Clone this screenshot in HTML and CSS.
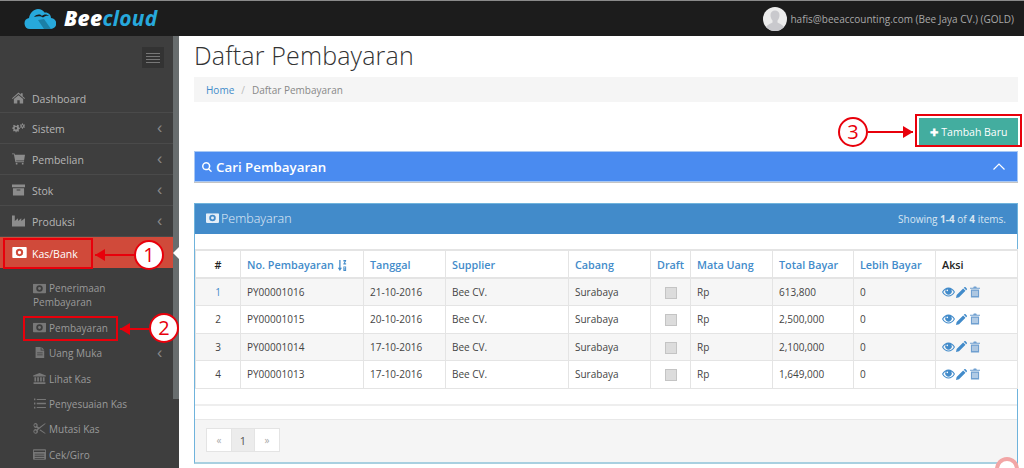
FILE: index.html
```html
<!DOCTYPE html>
<html lang="id">
<head>
<meta charset="utf-8">
<title>Daftar Pembayaran</title>
<link rel="stylesheet" href="styles.css">
</head>
<body>
<svg class="defs" width="0" height="0">
  <symbol id="i-money" viewBox="0 0 16 12"><path fill-rule="evenodd" d="M1 0h14a1 1 0 0 1 1 1v10a1 1 0 0 1-1 1H1a1 1 0 0 1-1-1V1a1 1 0 0 1 1-1zM8 2a4 4 0 1 0 0 8 4 4 0 0 0 0-8zM8 4.200a1.800 1.800 0 1 1 0 3.600 1.800 1.800 0 0 1 0-3.600z"/></symbol>
  <symbol id="i-eye" viewBox="0 0 16 12"><path fill-rule="evenodd" d="M0 6c2-3.600 4.800-5.500 8-5.500S14 2.400 16 6c-2 3.600-4.800 5.500-8 5.500S2 9.600 0 6zm1.500 0c1.500 2.500 3.800 4.200 6.500 4.200s5-1.700 6.500-4.200c-.9-1.400-2-2.500-3.300-3.200a4 4 0 1 1-6.400 0C3.500 3.500 2.400 4.600 1.500 6zM6.500 3a1 1 0 0 0 0 2 1 1 0 0 0 0-2z"/></symbol>
  <symbol id="i-pencil" viewBox="0 0 12 12"><path d="M0 12l.7-3.300L7.800 1.600l2.600 2.600-7.100 7.100zM8.500.9l.6-.6a1 1 0 0 1 1.400 0l1.200 1.200a1 1 0 0 1 0 1.400l-.6.600z"/></symbol>
  <symbol id="i-trash" viewBox="0 0 11 12"><path fill-rule="evenodd" d="M3.500 1.200 4.200 0h2.600l.7 1.200H11v1.200H0V1.200zM1 3.200h9V12H1zM2.800 4.500v6h1v-6zm2.200 0v6h1v-6zm2.200 0v6h1v-6z"/></symbol>
</svg>

<header class="topbar">
  <div class="brand">
    <svg class="brand-cloud" viewBox="0 0 32 22" width="32" height="22"><path fill="#27a9dc" d="M6 21a5.500 5.500 0 0 1-1-10.900C6 4.500 10 1 14 1c3 0 5 1.300 6.500 3.500C24 4 27 6.500 27 10a5.500 5.500 0 0 1-.5 11z"/><path fill="#1a1a1a" d="M10 9c3-3 6-3 8-1 2-2 5-2 7 0-2-.6-4-.2-6 1.600C17 8 14 8 10 9z"/><path fill="#1b7fa6" d="M14 12l6-1 7 10h-7z"/></svg>
    <span class="brand-name"><b>Bee</b><i>cloud</i></span>
  </div>
  <div class="user">
    <svg class="avatar" viewBox="0 0 24 24" width="24" height="24"><circle cx="12" cy="12" r="12" fill="#ececec"/><path fill="#c9c9cd" d="M3 20c2-3 5-3.500 6.500-4.500v-2C8 12 7.500 9.500 7.500 8c0-3 2-4.500 4.500-4.500S16.500 5 16.500 8c0 1.500-.5 4-2 5.500v2c1.500 1 4.500 1.500 6.500 4.500a12 12 0 0 1-18 0z"/></svg>
    <span>hafis@beeaccounting.com (Bee Jaya CV.) (GOLD)</span>
  </div>
</header>

<div class="layout">
  <aside class="sidebar">
    <div class="toggle-row">
      <button class="toggle" type="button" aria-label="Menu"><span></span><span></span><span></span><span></span></button>
    </div>
    <nav class="menu">
      <a class="item">
        <svg class="ico" viewBox="0 0 14 12"><path d="M7 0l2.500 2.200V.8h2v3.200L14 6.300l-.7.700L7 1.600.7 7 0 6.300zM2 7.200 7 3l5 4.200V12H8.300V8.500H5.700V12H2z"/></svg>
        <span class="label">Dashboard</span>
      </a>
      <a class="item">
        <svg class="ico" viewBox="-1 0 16 12"><path fill-rule="evenodd" d="M4 3.500l1-.3.400-1.200 1.300.4 1 .9-.6 1.100.5 1 1.100.3v1.500l-1.100.3-.5 1 .6 1.100-1 1-1.100-.6-1 .4-.3 1.100H3.700L3.400 10.200l-1-.4-1.100.6-1-1 .6-1.100-.4-1L-.6 7V5.500l1.100-.3.400-1-.6-1.100 1-1 1.100.6zM3.800 4.800a1.500 1.500 0 1 0 0 3 1.500 1.500 0 0 0 0-3z"/><path fill-rule="evenodd" d="M11.500 0l1 .4.100 1 .9.500.9-.4.600 1-.8.600v1l.8.600-.6 1-.9-.4-.9.500-.1 1h-1.200l-.1-1-.9-.5-.9.400-.6-1 .8-.6v-1L8.800 2.500l.6-1 .9.400.9-.5.100-1zM11 2.800a1 1 0 1 0 1.600 1.200A1 1 0 0 0 11 2.800z"/></svg>
        <span class="label">Sistem</span><span class="chev">‹</span>
      </a>
      <a class="item">
        <svg class="ico" viewBox="0 0 14 12"><path d="M0 0h2.700l.4 1.500H14l-1 6H4.500l.2 1H13v1H3.700L2 1H0z"/><circle cx="5" cy="11" r="1"/><circle cx="11.500" cy="11" r="1"/></svg>
        <span class="label">Pembelian</span><span class="chev">‹</span>
      </a>
      <a class="item">
        <svg class="ico" viewBox="0 0 14 12"><path fill-rule="evenodd" d="M0 0h14v3H0zM1 4h12v8H1zM5 5.500v1h4v-1z"/></svg>
        <span class="label">Stok</span><span class="chev">‹</span>
      </a>
      <a class="item">
        <svg class="ico" viewBox="0 0 14 12"><path d="M0 0h3v6l3.500-3v3L10 3v3l4-3v9H0z"/></svg>
        <span class="label">Produksi</span><span class="chev">‹</span>
      </a>
      <a class="item active">
        <svg class="ico" viewBox="0 0 16 12"><use href="#i-money"/></svg>
        <span class="label">Kas/Bank</span>
      </a>
      <div class="submenu">
        <a class="sub tall">
          <svg class="ico" viewBox="0 0 16 12"><use href="#i-money"/></svg>
          <span class="label">Penerimaan<br><span class="wrapline">Pembayaran</span></span>
        </a>
        <a class="sub">
          <svg class="ico" viewBox="0 0 16 12"><use href="#i-money"/></svg>
          <span class="label">Pembayaran</span>
        </a>
        <a class="sub">
          <svg class="ico" viewBox="0 0 12 14"><path fill-rule="evenodd" d="M1 0h6.500v4.500H12V14H1zM8.500 0 12 3.500H8.500zM3 7v1h7V7zm0 2.500v1h7v-1z"/></svg>
          <span class="label">Uang Muka</span><span class="chev">‹</span>
        </a>
        <a class="sub">
          <svg class="ico" viewBox="0 0 15 13"><path fill-rule="evenodd" d="M7.500 0 15 3v1H0V3zM1.500 5h2v5h-2zM4.800 5h2v5h-2zM8.200 5h2v5h-2zM11.500 5h2v5h-2zM.5 11h14v2H.5z"/></svg>
          <span class="label">Lihat Kas</span>
        </a>
        <a class="sub">
          <svg class="ico" viewBox="0 0 14 12"><path d="M4 1h10v1.300H4zM4 5.300h10v1.400H4zM4 9.700h10V11H4zM1 .5h1.500v2H1zM1 5h1.500v2H1zM1 9.500h1.500v2H1z"/></svg>
          <span class="label">Penyesuaian Kas</span>
        </a>
        <a class="sub">
          <svg class="ico" viewBox="0 0 14 12"><path fill-rule="evenodd" d="M2.500 0a2.500 2.500 0 0 1 2.200 3.600L6.500 5 12.500.5H14L5 8a2.500 2.500 0 1 1-1-1l1-.9-1-.8A2.500 2.500 0 1 1 2.500 0zm0 1.300a1.200 1.200 0 1 0 0 2.400 1.200 1.200 0 0 0 0-2.400zm0 7a1.200 1.200 0 1 0 0 2.400 1.200 1.200 0 0 0 0-2.400zM8 7l6 4.500h-1.500L7 8z"/></svg>
          <span class="label">Mutasi Kas</span>
        </a>
        <a class="sub">
          <svg class="ico" viewBox="0 0 15 12"><path fill-rule="evenodd" d="M1 0h13a1 1 0 0 1 1 1v10a1 1 0 0 1-1 1H1a1 1 0 0 1-1-1V1a1 1 0 0 1 1-1zM1 1.500V3h13V1.500zM2 5v1h11V5zm0 2.500v1h11v-1zM2 10v.8h11V10z"/></svg>
          <span class="label">Cek/Giro</span>
        </a>
      </div>
    </nav>
  </aside>
  <div class="scrollbar"><div class="thumb"></div></div>

  <main class="content">
    <h1 class="title">Daftar Pembayaran</h1>
    <div class="crumbs"><a>Home</a><span class="sep">/</span><span class="current">Daftar Pembayaran</span></div>
    <div class="actions">
      <button class="btn-add" type="button"><b>✚</b> Tambah Baru</button>
    </div>
    <section class="search">
      <svg class="search-ico" viewBox="0 0 12 12" width="10" height="10"><path fill-rule="evenodd" d="M5 0a5 5 0 0 1 4 8l3 3-1.200 1.200-3-3A5 5 0 1 1 5 0zm0 1.800a3.200 3.200 0 1 0 0 6.400 3.200 3.200 0 0 0 0-6.400z"/></svg>
      <span>Cari Pembayaran</span>
      <svg class="collapse" viewBox="0 0 12 7" width="12" height="7"><path d="M.5 6.500 6 1l5.500 5.500" fill="none" stroke="#fff" stroke-width="1.200"/></svg>
    </section>
    <section class="panel">
      <div class="panel-head">
        <div class="panel-title"><svg class="panel-ico" viewBox="0 0 16 12"><use href="#i-money"/></svg>Pembayaran</div>
        <div class="summary">Showing <b>1-4</b> of <b>4</b> items.</div>
      </div>
      <div class="panel-body">
        <table class="grid">
          <thead>
            <tr>
              <th class="c-num dark">#</th>
              <th>No. Pembayaran <svg class="sort" viewBox="0 0 10 12" width="10" height="11"><path d="M2 0h1.400v8.500H5L2.700 12 .4 8.500H2zM6.500 0h3v1L8 3.500h1.500V5h-3V4L8 1.500H6.500zM6.500 7h3v5h-3zM7.500 8v1.200h1V8zm0 2.300V11h1v-.7z"/></svg></th>
              <th>Tanggal</th>
              <th>Supplier</th>
              <th>Cabang</th>
              <th>Draft</th>
              <th>Mata Uang</th>
              <th>Total Bayar</th>
              <th>Lebih Bayar</th>
              <th class="dark">Aksi</th>
            </tr>
          </thead>
          <tbody>
            <tr>
              <td class="c-num link">1</td><td>PY00001016</td><td>21-10-2016</td><td>Bee CV.</td><td>Surabaya</td>
              <td class="c-check"><span class="check"></span></td><td>Rp</td><td>613,800</td><td>0</td>
              <td class="acts"><svg class="a-eye"><use href="#i-eye"/></svg><svg class="a-pen"><use href="#i-pencil"/></svg><svg class="a-trash"><use href="#i-trash"/></svg></td>
            </tr>
            <tr>
              <td class="c-num">2</td><td>PY00001015</td><td>20-10-2016</td><td>Bee CV.</td><td>Surabaya</td>
              <td class="c-check"><span class="check"></span></td><td>Rp</td><td>2,500,000</td><td>0</td>
              <td class="acts"><svg class="a-eye"><use href="#i-eye"/></svg><svg class="a-pen"><use href="#i-pencil"/></svg><svg class="a-trash"><use href="#i-trash"/></svg></td>
            </tr>
            <tr>
              <td class="c-num">3</td><td>PY00001014</td><td>17-10-2016</td><td>Bee CV.</td><td>Surabaya</td>
              <td class="c-check"><span class="check"></span></td><td>Rp</td><td>2,100,000</td><td>0</td>
              <td class="acts"><svg class="a-eye"><use href="#i-eye"/></svg><svg class="a-pen"><use href="#i-pencil"/></svg><svg class="a-trash"><use href="#i-trash"/></svg></td>
            </tr>
            <tr>
              <td class="c-num">4</td><td>PY00001013</td><td>17-10-2016</td><td>Bee CV.</td><td>Surabaya</td>
              <td class="c-check"><span class="check"></span></td><td>Rp</td><td>1,649,000</td><td>0</td>
              <td class="acts"><svg class="a-eye"><use href="#i-eye"/></svg><svg class="a-pen"><use href="#i-pencil"/></svg><svg class="a-trash"><use href="#i-trash"/></svg></td>
            </tr>
          </tbody>
        </table>
        <div class="spacer"></div>
      </div>
      <div class="panel-foot">
        <div class="pager"><span class="pg off">«</span><span class="pg on">1</span><span class="pg off">»</span></div>
      </div>
    </section>
  </main>
</div>

<!-- screenshot annotations lying over the interface -->
<div class="mark mark-kas"></div>
<div class="mark mark-pay"></div>
<div class="mark mark-add"></div>
<div class="badge badge-1">1</div>
<div class="badge badge-2">2</div>
<div class="badge badge-3">3</div>
<div class="arrow arrow-1"></div>
<div class="arrow arrow-2"></div>
<div class="arrow arrow-3"></div>
<div class="corner-ring"></div>
<div class="active-notch"></div>
</body>
</html>
```

FILE: styles.css
```css
* { box-sizing: border-box; }
html, body { margin: 0; height: 468px; overflow: hidden; }
body { position: relative; font-family: "Open Sans", "DejaVu Sans", sans-serif; font-size: 11px; color: #555; background: #fff; }
.defs { position: absolute; }

.topbar { height: 36px; background: #1c1c1c; border-top: 1px solid #8a8a8a; display: flex; align-items: center; justify-content: space-between; padding: 0 10px 0 24px; }
.brand { display: flex; align-items: center; gap: 8px; }
.brand-cloud { display: block; }
.brand-name { font-family: "Open Sans", sans-serif; font-size: 21px; font-style: italic; font-weight: 700; letter-spacing: .25px; line-height: 1; }
.brand-name b { color: #fff; font-weight: 800; }
.brand-name i { color: #27a9dc; }
.user { display: flex; align-items: center; gap: 3px; color: #a8a8a8; font-size: 10px; }
.avatar { display: block; }

.layout { display: flex; height: 432px; }
.sidebar { width: 173px; flex: none; background: #3e3e3e; overflow: hidden; }
.scrollbar { width: 6px; flex: none; background: #3e3e3e; }
.thumb { height: 363px; background: #686d6e; }

.toggle-row { height: 47px; display: flex; justify-content: flex-end; align-items: flex-start; padding: 11px 9px 0 0; }
.toggle { width: 22px; height: 21px; padding: 3px 4px; background: #333; border: 0; display: flex; flex-direction: column; justify-content: center; gap: 2px; }
.toggle span { display: block; height: 1px; background: #777; }

.item { display: flex; align-items: center; height: 31px; padding: 0 0 0 12px; color: #b5b5b5; font-size: 10.500px; border-bottom: 1px solid #4a4a4a; }
.item .ico { width: 13px; height: 12px; fill: #8c8c8c; margin-right: 7px; flex: none; }
.item.active { background: #d04a3a; color: #fff; border-bottom: 0; width: 179px; position: relative; }
.item.active .ico { width: 15px; height: 11px; fill: #fff; margin-right: 5px; }
.item:first-child { height: 30px; }
.item .label { padding-top: 2px; }
.label { flex: 1; padding-top: 1px; }
.chev { width: 16px; flex: none; font-size: 16px; line-height: 1; color: #888; font-family: "Liberation Sans", sans-serif; }

.submenu { padding-top: 7px; }
.sub { display: flex; align-items: center; height: 25.300px; padding: 0 0 0 33px; color: #9a9a9a; font-size: 10px; }
.sub .ico { width: 13px; height: 11px; fill: #777; margin-right: 3px; flex: none; }
.sub.tall { height: 40px; align-items: flex-start; padding-top: 5px; }
.sub.tall .ico { margin-top: 3px; }
.wrapline { margin-left: -16px; }

.content { flex: 1; min-width: 0; padding: 0 6px 0 15px; }
.title { margin: 0; height: 41px; padding-top: 2px; font-size: 25px; font-weight: 300; line-height: 34px; color: #333; letter-spacing: .15px; }
.crumbs { height: 25px; background: #f5f5f5; padding: 0 12px; display: flex; align-items: center; font-size: 10px; color: #888; }
.crumbs a { color: #428bca; }
.sep { margin: 0 7px; color: #bbb; }

.actions { height: 49px; display: flex; justify-content: flex-end; align-items: flex-start; padding-top: 16px; }
.btn-add { width: 99px; height: 27px; padding: 0; border: 0; background: #43ad9f; color: #fff; font: 10.500px "Open Sans", sans-serif; }
.btn-add b { font-size: 10px; margin-right: 1px; }

.search { height: 31px; background: #4a8bf0; border: 1px solid #a8c8f4; color: #fff; display: flex; align-items: center; padding: 0 12px 0 7px; font-size: 13.300px; font-weight: 600; box-shadow: 0 1px 0 #c4c4c4; }
.search-ico { fill: #fff; margin-right: 4px; }
.collapse { margin-left: auto; }

.panel { margin-top: 21px; height: 261px; border: 1px solid #6fb3dc; border-bottom: 2px solid #a8d0e0; display: flex; flex-direction: column; }
.panel-head { height: 30px; flex: none; background: #428bca; color: #fff; display: flex; align-items: center; justify-content: space-between; padding: 0 11px; }
.panel-title { font-size: 12.500px; font-weight: 300; display: flex; align-items: center; color: #e4eef8; padding-bottom: 2px; }
.panel-ico { width: 13px; height: 10px; fill: #e4eef8; margin-right: 2px; }
.summary { font-size: 10px; color: #d8e6f2; }
.summary b { font-weight: 700; }

.panel-body { flex: 1; padding-top: 15px; }
.grid { width: 822px; table-layout: fixed; border-collapse: collapse; font-size: 10px; color: #444; }
.grid th, .grid td { border: 1px solid #e4e4e4; padding: 0 6px; text-align: left; }
.grid thead tr { height: 28px; }
.grid tbody tr { height: 27.500px; }
.grid tbody tr:nth-child(odd) { background: #f6f6f6; }
.grid th { color: #428bca; font-weight: 600; font-size: 10.800px; border-width: 2px 1px 2px 1px; white-space: nowrap; }
.grid th.dark { color: #222; }
.grid th:nth-child(1) { width: 45px; }
.grid th:nth-child(2) { width: 123px; }
.grid th:nth-child(3) { width: 82px; }
.grid th:nth-child(4) { width: 123px; }
.grid th:nth-child(5) { width: 82px; }
.grid th:nth-child(6) { width: 40px; }
.grid th:nth-child(7) { width: 82px; }
.grid th:nth-child(8) { width: 81px; }
.grid th:nth-child(9) { width: 82px; }
.grid th:nth-child(10) { width: 82px; }
.grid .c-num { text-align: center; }
.link { color: #428bca; }
.c-check { text-align: center !important; padding: 0 !important; }
.check { display: inline-block; width: 12px; height: 12px; background: #dcdcdc; border: 1px solid #c4c4c4; vertical-align: middle; }
.sort { fill: #428bca; vertical-align: -2px; }
.acts { fill: #428bca; white-space: nowrap; }
.acts svg { display: inline-block; vertical-align: middle; position: relative; top: -1px; }
.a-eye { width: 13px; height: 10px; margin-right: 1px; }
.a-pen { width: 11px; height: 11px; margin-right: 3px; }
.a-trash { width: 10px; height: 12px; fill: #6f9fd0; }
.spacer { height: 17px; border-bottom: 2px solid #eee; }

.panel-foot { height: 43px; flex: none; background: #f5f5f5; border-top: 1px solid #e8e8e8; padding: 8px 11px 0; }
.pager { display: inline-flex; height: 24px; border: 1px solid #e4e4e4; }
.pg { width: 24px; display: flex; align-items: center; justify-content: center; background: #fff; font-size: 10px; }
.pg.off { color: #aaa; }
.pg.on { background: #ececec; color: #555; border-left: 1px solid #e4e4e4; border-right: 1px solid #e4e4e4; font-size: 11px; }

.mark { position: absolute; border: 2px solid #e8000b; }
.mark-kas { left: 3px; top: 238px; width: 90px; height: 31px; }
.mark-pay { left: 23px; top: 316px; width: 95px; height: 25px; }
.mark-add { left: 915px; top: 114px; width: 107px; height: 33px; }
.badge { position: absolute; width: 30px; height: 30px; border: 2px solid #e8000b; border-radius: 50%; background: #fff; color: #e8000b; font: 500 20px/26px "Open Sans", sans-serif; text-align: center; }
.badge-1 { left: 134px; top: 240px; }
.badge-2 { left: 149px; top: 313px; }
.badge-3 { left: 838px; top: 117px; background: transparent; }
.arrow { position: absolute; height: 2px; background: #e8000b; }
.arrow::after { content: ""; position: absolute; top: -5px; border-style: solid; border-width: 6px 0 6px 0; border-color: transparent #e8000b; }
.arrow-1 { left: 95px; top: 254px; width: 40px; }
.arrow-2 { left: 120px; top: 328px; width: 30px; }
.arrow-1::after, .arrow-2::after { left: 0; border-right-width: 10px; border-right-color: #e8000b; border-left: 0; }
.arrow-3 { left: 868px; top: 131px; width: 45px; }
.arrow-3::after { right: 0; border-left-width: 10px; border-left-color: #e8000b; border-right: 0; }
.corner-ring { position: absolute; left: 995px; top: 457px; width: 24px; height: 24px; border-radius: 50%; border: 4px solid #f2a6a6; background: #fff; }
.active-notch { position: absolute; left: 173px; top: 245px; width: 0; height: 0; border: 8px solid transparent; border-right-color: #fff; border-left: 0; }
```
